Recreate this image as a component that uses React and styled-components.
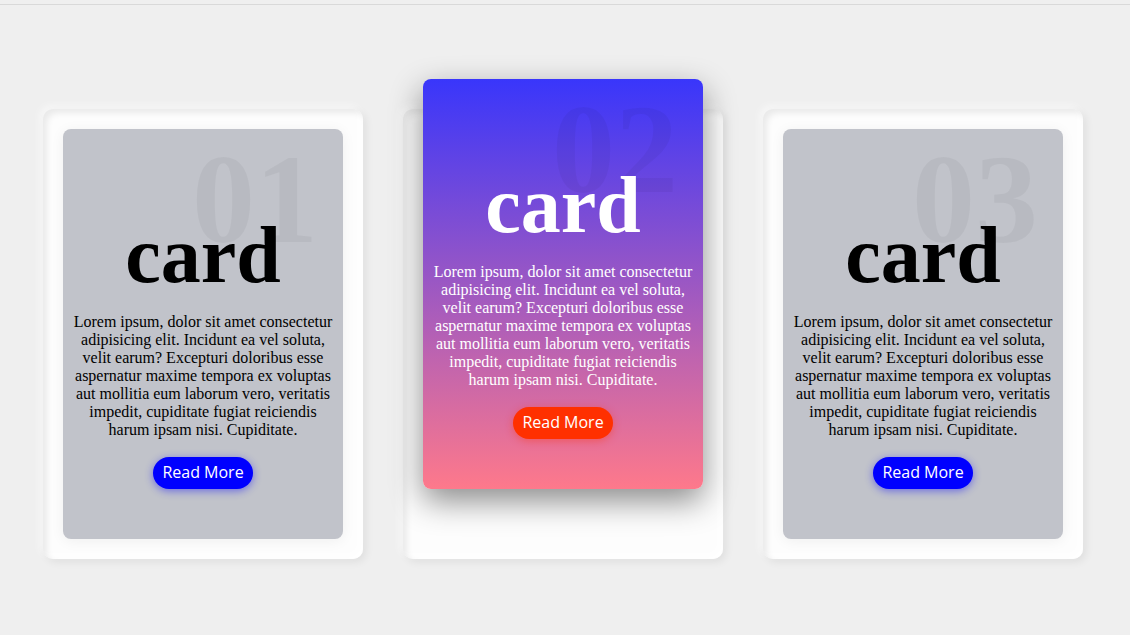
import React from 'react';
import styled, { createGlobalStyle } from 'styled-components';

const GlobalStyle = createGlobalStyle`
  html, body {
    margin: 0;
    padding: 0;
    background: #efefef;
  }
  body {
    font-family: "Liberation Serif", "Times New Roman", serif;
    min-height: 635px;
  }
`;

const Page = styled.div`
  margin-top: 4px;
  border-top: 1px solid #d9d9d9;
  padding-top: 104px;
  height: 630px;
  box-sizing: border-box;
`;

const Row = styled.div`
  display: flex;
  justify-content: center;
  gap: 40px;
  padding-right: 4px;
`;

const Slot = styled.div`
  position: relative;
  width: 320px;
  height: 450px;
  padding: 20px;
  box-sizing: border-box;
  border-radius: 10px;
  background: #fdfdfd;
  box-shadow:
    inset 4px 4px 6px rgba(0, 0, 0, 0.08),
    inset -4px -4px 10px rgba(255, 255, 255, 0.9),
    3px 3px 8px rgba(0, 0, 0, 0.07),
    -3px -3px 8px rgba(255, 255, 255, 0.6);
`;

const Card = styled.div`
  position: relative;
  height: 410px;
  border-radius: 8px;
  overflow: hidden;
  display: flex;
  flex-direction: column;
  align-items: center;
  padding: 82px 9px 0;
  box-sizing: border-box;
  text-align: center;
  background: ${({ active }) =>
    active ? 'linear-gradient(to bottom, #3936fb, #fe798b)' : '#c1c3ca'};
  color: ${({ active }) => (active ? '#fff' : '#000')};
  transform: ${({ active }) => (active ? 'translateY(-50px)' : 'none')};
  box-shadow: ${({ active }) =>
    active ? '0 12px 32px rgba(0, 0, 0, 0.45)' : '0 2px 14px rgba(0, 0, 0, 0.06)'};
`;

const Number = styled.span`
  position: absolute;
  top: 2px;
  right: 25px;
  font-size: 126px;
  font-weight: 700;
  line-height: 1.1;
  color: rgba(0, 0, 0, 0.045);
  pointer-events: none;
`;

const Title = styled.h3`
  position: relative;
  margin: 0;
  font-size: 80px;
  font-weight: 700;
  line-height: 88px;
`;

const Text = styled.p`
  position: relative;
  margin: 14px 0 0;
  font-size: 16px;
  line-height: 18px;
`;

const Button = styled.a`
  position: relative;
  display: inline-block;
  margin-top: 18px;
  padding: 0 9px;
  height: 32px;
  line-height: 31px;
  border-radius: 18px;
  font-family: "Open Sans", "Noto Sans", sans-serif;
  font-size: 16px;
  color: #fff;
  text-decoration: none;
  background: ${({ color }) => color};
  box-shadow: 0 2px 8px ${({ glow }) => glow};
`;

const lorem =
  'Lorem ipsum, dolor sit amet consectetur adipisicing elit. Incidunt ea vel soluta, velit earum? Excepturi doloribus esse aspernatur maxime tempora ex voluptas aut mollitia eum laborum vero, veritatis impedit, cupiditate fugiat reiciendis harum ipsam nisi. Cupiditate.';

const cards = [
  { num: '01', active: false },
  { num: '02', active: true },
  { num: '03', active: false },
];

const App = () => (
  <>
    <GlobalStyle />
    <Page>
      <Row>
        {cards.map(card => (
          <Slot key={card.num}>
            <Card active={card.active}>
              <Number>{card.num}</Number>
              <Title>card</Title>
              <Text>{lorem}</Text>
              <Button
                href="#"
                color={card.active ? '#ff3000' : '#0000ff'}
                glow={card.active ? 'rgba(255, 48, 0, 0.4)' : 'rgba(0, 0, 255, 0.45)'}
              >
                Read More
              </Button>
            </Card>
          </Slot>
        ))}
      </Row>
    </Page>
  </>
);

export default App;
